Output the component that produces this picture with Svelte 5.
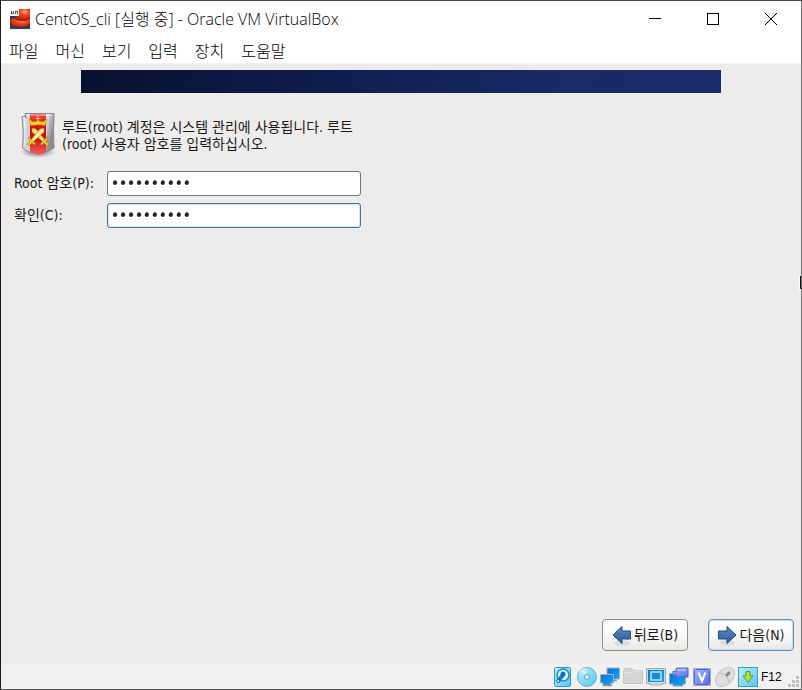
<script lang="ts">
    let rootPassword = $state("centos6cli");
    let confirmPassword = $state("centos6cli");

    const menus = ["파일", "머신", "보기", "입력", "장치", "도움말"];
</script>

<svelte:head>
    <title>CentOS_cli [실행 중] - Oracle VM VirtualBox</title>
</svelte:head>

<div class="window">
    <header class="titlebar">
        <svg class="logo" width="20" height="20" viewBox="0 0 20 20" aria-hidden="true">
            <defs>
                <radialGradient id="hat" cx="0.6" cy="0.25" r="0.8">
                    <stop offset="0" stop-color="#ffa385" />
                    <stop offset="0.4" stop-color="#f4451f" />
                    <stop offset="1" stop-color="#c01a08" />
                </radialGradient>
            </defs>
            <rect width="20" height="20" fill="#363a46" />
            <path d="M8 0H20V12L10 15L3 12L7 9Z" fill="#e23a1c" />
            <path d="M7 5Q8 0 14 0Q19 0 20 4V9Q13 13 6 9Z" fill="url(#hat)" />
            <path d="M6 9Q12 12 20 8V10Q13 14 6 11Z" fill="#a02412" />
            <path d="M0 12Q2 8 5 10Q9 14 20 11V14Q17 18 10 18Q1 17 0 12Z" fill="url(#hat)" />
            <rect width="9" height="7" fill="#f0f1f3" />
            <path d="M1 2H2V4H3V2H4V5H1ZM5 2H8V5H7V3H6V5H5Z" fill="#585d68" />
        </svg>
        <h1>CentOS_cli [실행 중] - Oracle VM VirtualBox</h1>
        <div class="controls">
            <button type="button" aria-label="최소화">
                <svg width="12" height="12" viewBox="0 0 12 12"><path d="M0 5.5H12" /></svg>
            </button>
            <button type="button" aria-label="최대화">
                <svg width="12" height="12" viewBox="0 0 12 12"><rect x="0.5" y="0.5" width="11" height="11" /></svg>
            </button>
            <button type="button" aria-label="닫기">
                <svg width="12" height="12" viewBox="0 0 12 12"><path d="M0 0L12 12M12 0L0 12" /></svg>
            </button>
        </div>
    </header>

    <nav class="menubar">
        {#each menus as menu}
            <button type="button">{menu}</button>
        {/each}
    </nav>

    <main class="screen">
        <div class="banner"></div>

        <form id="root-form" onsubmit={(e) => e.preventDefault()}>
            <div class="intro">
                <svg width="38" height="48" viewBox="0 0 38 48" aria-hidden="true">
                    <defs>
                        <linearGradient id="steel" x1="0" y1="0" x2="1" y2="0.3">
                            <stop offset="0" stop-color="#f8f8fa" />
                            <stop offset="0.25" stop-color="#cfced6" />
                            <stop offset="0.75" stop-color="#dddce2" />
                            <stop offset="1" stop-color="#8c8a94" />
                        </linearGradient>
                        <linearGradient id="red" x1="0" y1="0" x2="0" y2="1">
                            <stop offset="0" stop-color="#f04a48" />
                            <stop offset="0.25" stop-color="#d81418" />
                            <stop offset="0.6" stop-color="#cd0c12" />
                            <stop offset="1" stop-color="#f16060" />
                        </linearGradient>
                        <radialGradient id="shade">
                            <stop offset="0" stop-color="#777" />
                            <stop offset="1" stop-color="#777" stop-opacity="0" />
                        </radialGradient>
                    </defs>
                    <ellipse cx="18" cy="41" rx="18" ry="6" fill="url(#shade)" />
                    <path d="M5 2.500H34V5Q33 20 34 37Q26 42 18 43.500Q8 42 2.500 37Q4 22 2.500 8L1.500 6L5 5L6 7Z" fill="url(#steel)" stroke="#85848c" />
                    <path d="M10 3H26V41Q22 43 18 43.500Q14 43 10 41Z" fill="url(#red)" />
                    <path d="M7 4H32M4.500 10Q6 23 4 36" fill="none" stroke="#fff" stroke-opacity="0.7" />
                    <path d="M11 14.500L8.500 8L13 11L18 10L23 11L27.500 8L25 14.500Q18 13 11 14.500Z" fill="#f3d51c" stroke="#c79a0c" stroke-width="0.5" />
                    <path d="M18 5V11M15.500 7.500H20.500" stroke="#f7dc2a" stroke-width="1.200" />
                    <g stroke="#a8780c" stroke-width="0.6" stroke-linejoin="round">
                        <path d="M12 17L16 18L26 30L24 32L12 21Z" fill="#f3df6d" />
                        <path d="M24 17L20 18L10 30L12 32L24 21Z" fill="#fdf2a0" />
                        <path d="M8 26L10 27L16 33L14 34L12 32L9 35L7 33L10 31ZM28 26L26 27L20 33L22 34L24 32L27 35L29 33L26 31Z" fill="#eccb25" />
                    </g>
                </svg>
                <p>루트(root) 계정은 시스템 관리에 사용됩니다. 루트(root) 사용자 암호를 입력하십시오.</p>
            </div>

            <div class="fields">
                <label for="root-password">Root 암호(P):</label>
                <input id="root-password" type="password" bind:value={rootPassword} />
                <label for="confirm-password">확인(C):</label>
                <input id="confirm-password" class="active" type="password" bind:value={confirmPassword} />
            </div>
        </form>

        <div class="actions">
            <button type="button">
                <svg width="20" height="22" viewBox="0 0 20 22" aria-hidden="true">
                    <defs>
                        <linearGradient id="arrow" x1="0" y1="0" x2="0" y2="1">
                            <stop offset="0" stop-color="#5b8cc4" />
                            <stop offset="1" stop-color="#2c5b98" />
                        </linearGradient>
                    </defs>
                    <ellipse cx="10" cy="19" rx="8" ry="3" fill="#ddd" />
                    <path d="M1 11L10 2.500V7H18.500V15H10V19.500Z" fill="url(#arrow)" stroke="#244b7c" />
                </svg>
                뒤로(B)
            </button>
            <button class="active" type="submit" form="root-form">
                <svg width="20" height="22" viewBox="0 0 20 22" aria-hidden="true">
                    <ellipse cx="10" cy="19" rx="8" ry="3" fill="#ddd" />
                    <path d="M19 11L10 2.500V7H1.500V15H10V19.500Z" fill="url(#arrow)" stroke="#244b7c" />
                </svg>
                다음(N)
            </button>
        </div>
    </main>

    <footer class="statusbar">
        <svg width="20" height="20" viewBox="0 0 20 20" aria-hidden="true">
            <defs>
                <linearGradient id="ice" x1="0" y1="0" x2="1" y2="1">
                    <stop offset="0" stop-color="#c0effc" />
                    <stop offset="1" stop-color="#55c4ef" />
                </linearGradient>
                <linearGradient id="blue" x1="0" y1="0" x2="1" y2="1">
                    <stop offset="0" stop-color="#0871d8" />
                    <stop offset="1" stop-color="#18a6f5" />
                </linearGradient>
                <linearGradient id="violet" x1="0" y1="0" x2="1" y2="1">
                    <stop offset="0" stop-color="#a5b7ff" />
                    <stop offset="1" stop-color="#536de8" />
                </linearGradient>
            </defs>
            <rect x="0.500" y="0.500" width="16" height="19" rx="1" fill="url(#ice)" stroke="#2797cf" />
            <circle cx="9" cy="8" r="6" fill="#e4f9ff" stroke="#1b85cd" stroke-width="1.500" />
            <path d="M9 8L4 14" stroke="#1477c9" stroke-width="4" stroke-linecap="round" />
            <circle cx="9" cy="7" r="2.500" fill="#136ebd" />
            <circle cx="4" cy="14" r="1" fill="#d8f5ff" />
        </svg>
        <svg width="20" height="20" viewBox="0 0 20 20" aria-hidden="true">
            <circle cx="10" cy="10" r="9.500" fill="url(#ice)" stroke="#6cafd0" />
            <path d="M10 10L2 5Q5 1 9 1Z" fill="#e0f8ff" fill-opacity="0.6" />
            <circle cx="10" cy="10" r="2.500" fill="#fff" stroke="#3c9bd0" />
        </svg>
        <svg width="20" height="20" viewBox="0 0 20 20" aria-hidden="true">
            <path d="M7 1H19.500V12H15V14H9V12H7Z" fill="url(#blue)" stroke="#a8b0b5" />
            <path d="M0.500 7.500H13.500V16H11V18.500H3V16H0.500Z" fill="url(#blue)" stroke="#a8b0b5" />
            <path d="M3 18.500H12M14 13.500H17" stroke="#8a9297" stroke-width="1.500" />
        </svg>
        <svg width="20" height="20" viewBox="0 0 20 20" aria-hidden="true">
            <path d="M1 5V2.500Q1 1.500 2 1.500H9L11 3.500H19.500V16.500H0.500V5Z" fill="#d5d5d5" stroke="#c5c5c5" />
            <path d="M1 5.500H10L11 4H19" fill="none" stroke="#e6e6e6" />
        </svg>
        <svg width="20" height="20" viewBox="0 0 20 20" aria-hidden="true">
            <path d="M0.500 1.500H19.500V16.500H16V18H4V16.500H0.500Z" fill="#d4d8da" stroke="#a5acb0" />
            <rect x="2" y="3" width="16" height="12" fill="url(#blue)" />
            <rect x="5" y="5" width="10" height="8" fill="#1489df" stroke="#b5edff" stroke-width="1.500" />
        </svg>
        <svg width="20" height="20" viewBox="0 0 20 20" aria-hidden="true">
            <path d="M0.500 6.500H16.500V17H14V19H4V17H0.500Z" fill="url(#blue)" stroke="#9ba9b1" />
            <path d="M4 4L7 5V2Q7 1 8 1H19V10H8Q7 10 7 9V7L4 9Z" fill="url(#violet)" stroke="#5068c6" />
            <path d="M9 3H17" stroke="#d4dcff" />
        </svg>
        <svg width="20" height="20" viewBox="0 0 20 20" aria-hidden="true">
            <rect x="1.500" y="1.500" width="17" height="17" fill="none" stroke="#465dc5" stroke-dasharray="1 1" />
            <rect x="2.500" y="2.500" width="15" height="15" rx="1" fill="url(#violet)" stroke="#4c64cc" />
            <path d="M6.500 5.500L10 14L13.500 5.500" fill="none" stroke="#fff" stroke-width="2" />
        </svg>
        <svg width="20" height="20" viewBox="0 0 20 20" aria-hidden="true">
            <ellipse cx="10" cy="10" rx="11" ry="7.500" transform="rotate(-45 10 10)" fill="#dedede" stroke="#c2c2c2" />
            <path d="M5 6Q12 7 14 15M11 9L15 4" fill="none" stroke="#bcbcbc" />
            <path d="M12 8L14 6" stroke="#858585" stroke-width="3" stroke-linecap="round" />
        </svg>
        <svg width="20" height="20" viewBox="0 0 20 20" aria-hidden="true">
            <rect x="0.500" y="0.500" width="19" height="19" fill="url(#ice)" stroke="#369fce" />
            <path d="M8 4.500H12V9H15L10 15.500L5 9H8Z" fill="#a7e93a" stroke="#559f27" />
        </svg>
        <span>F12</span>
        <svg class="grip" width="11" height="11" viewBox="0 0 11 11" aria-hidden="true">
            <path d="M8 0H11V3H8ZM4 4H7V7H4ZM8 4H11V7H8ZM0 8H3V11H0ZM4 8H7V11H4ZM8 8H11V11H8Z" fill="#bfbfbf" />
        </svg>
    </footer>

    <div class="pointer"></div>
</div>

<style>
    :global(body) {
        margin: 0;
    }

    .window {
        position: relative;
        display: flex;
        flex-direction: column;
        box-sizing: border-box;
        min-height: 100vh;
        overflow: hidden;
        border: 1px solid #1d1a1c;
        border-top-color: #444;
        border-right-color: #6e6e6e;
        border-bottom-color: #555;
        background: #edeceb;
        color: #000;
        font-family: "Open Sans", "Noto Sans CJK KR", sans-serif;
        font-size: 16px;
    }

    button {
        margin: 0;
        padding: 0;
        border: 0;
        background: transparent;
        color: inherit;
        font: inherit;
    }

    svg {
        display: block;
        flex: none;
    }

    .titlebar {
        display: flex;
        align-items: center;
        height: 36px;
        padding-left: 9px;
        background: #fff;
    }

    h1 {
        flex: 1;
        margin: 0 0 0 5px;
        font-size: 16px;
        font-weight: 300;
        line-height: 20px;
        white-space: nowrap;
    }

    .controls {
        display: flex;
        height: 100%;
        padding-right: 1px;
    }

    .controls button {
        display: flex;
        align-items: center;
        justify-content: center;
        width: 58px;
    }

    .controls svg {
        fill: none;
        stroke: #000;
    }

    .menubar {
        display: flex;
        gap: 17px;
        height: 26px;
        padding: 0 8px;
        border-bottom: 1px solid #f2f2f2;
        background: #fff;
        font-family: "Noto Sans CJK KR", sans-serif;
        font-size: 16px;
        font-weight: 300;
        line-height: 26px;
    }

    .screen {
        display: flex;
        flex: 1;
        flex-direction: column;
        color: #1a1a1a;
        font-family: "DejaVu Sans Condensed", "Noto Sans CJK KR", sans-serif;
        font-size: 14px;
        line-height: 17px;
    }

    .banner {
        height: 23px;
        margin: 6px 80px 0;
        background: linear-gradient(100deg, #08112e, #0e1b49 30%, #172b68 75%, #172a6a);
    }

    .intro {
        display: flex;
        align-items: center;
        gap: 4px;
        width: 360px;
        margin: 18px 0 12px 19px;
    }

    .intro p {
        width: 300px;
        margin: 2px 0 0;
        word-break: break-all;
    }

    .fields {
        display: grid;
        grid-template-columns: 86px 254px;
        gap: 7px;
        align-items: center;
        margin-left: 13px;
    }

    .fields input {
        box-sizing: border-box;
        width: 100%;
        height: 25px;
        padding: 0 3px;
        border: 1px solid #777573;
        border-radius: 3px;
        outline: 0;
        background: #fff;
        color: #1a1a1a;
        font-family: "DejaVu Sans Condensed", sans-serif;
        font-size: 15px;
    }

    .fields input.active {
        border-color: #4b6f9f;
        box-shadow: inset 0 0 0 1px #d5e4f6;
    }

    .actions {
        display: flex;
        justify-content: flex-end;
        gap: 20px;
        margin-top: auto;
        padding: 0 7px 13px;
    }

    .actions button {
        display: flex;
        align-items: center;
        justify-content: center;
        gap: 2px;
        box-sizing: border-box;
        width: 86px;
        height: 32px;
        border: 1px solid #928f8b;
        border-radius: 4px;
        background: linear-gradient(#fff, #fbfbfa 45%, #e9e8e6);
        white-space: nowrap;
    }

    .actions button.active {
        border-color: #6b8fbd;
        box-shadow: inset 0 0 0 1px #c9daed;
    }

    .statusbar {
        display: flex;
        align-items: center;
        justify-content: flex-end;
        gap: 3px;
        height: 25px;
        padding-right: 2px;
        background: #f0f0f0;
        font-family: "Liberation Sans", sans-serif;
        font-size: 12px;
        line-height: 20px;
    }

    .statusbar span {
        width: 24px;
    }

    .grip {
        align-self: flex-end;
        margin-bottom: 2px;
    }

    /* guest mouse cursor, cut off by the window edge */
    .pointer {
        position: absolute;
        top: 275px;
        right: 0;
        width: 1px;
        height: 13px;
        background: #111;
        box-shadow: 0 0 0 1px #fff;
    }
</style>
